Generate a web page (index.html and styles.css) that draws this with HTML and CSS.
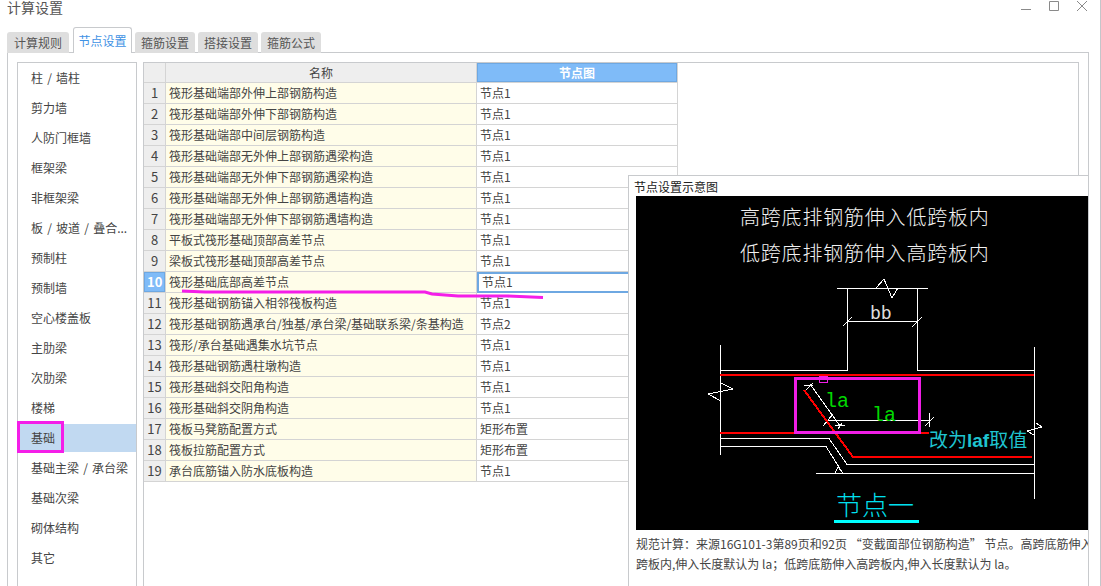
FILE: index.html
```html
<!doctype html>
<html lang="zh-CN">
  <head>
    <meta charset="UTF-8" />
    <meta name="viewport" content="width=device-width, initial-scale=1.0" />
    <title>计算设置</title>
    <link rel="stylesheet" href="styles.css">
  </head>

  <body>
    <div class="window">
      <div class="title-bar">
        <span class="title">计算设置</span>
        <div class="window-buttons">
          <svg width="12" height="12" viewBox="0 0 12 12"><path d="M1 9.5h10" /></svg>
          <svg width="12" height="12" viewBox="0 0 12 12"><path d="M1.5 1.5h9v9h-9z" /></svg>
          <svg width="12" height="12" viewBox="0 0 12 12"><path d="M1 1l10 10M11 1L1 11" /></svg>
        </div>
      </div>

      <div class="tabs">
        <div class="tab">计算规则</div>
        <div class="tab active">节点设置</div>
        <div class="tab">箍筋设置</div>
        <div class="tab">搭接设置</div>
        <div class="tab">箍筋公式</div>
      </div>

      <div class="panel">
        <ul class="side-list">
          <li>柱 / 墙柱</li>
          <li>剪力墙</li>
          <li>人防门框墙</li>
          <li>框架梁</li>
          <li>非框架梁</li>
          <li>板 / 坡道 / 叠合...</li>
          <li>预制柱</li>
          <li>预制墙</li>
          <li>空心楼盖板</li>
          <li>主肋梁</li>
          <li>次肋梁</li>
          <li>楼梯</li>
          <li class="selected">基础</li>
          <li>基础主梁 / 承台梁</li>
          <li>基础次梁</li>
          <li>砌体结构</li>
          <li>其它</li>
        </ul>

        <div class="grid-box">
          <table class="grid">
            <thead>
              <tr><th class="num"></th><th class="name">名称</th><th class="node">节点图</th></tr>
            </thead>
            <tbody>
              <tr><td class="num">1</td><td class="name">筏形基础端部外伸上部钢筋构造</td><td>节点1</td></tr>
              <tr><td class="num">2</td><td class="name">筏形基础端部外伸下部钢筋构造</td><td>节点1</td></tr>
              <tr><td class="num">3</td><td class="name">筏形基础端部中间层钢筋构造</td><td>节点1</td></tr>
              <tr><td class="num">4</td><td class="name">筏形基础端部无外伸上部钢筋遇梁构造</td><td>节点1</td></tr>
              <tr><td class="num">5</td><td class="name">筏形基础端部无外伸下部钢筋遇梁构造</td><td>节点1</td></tr>
              <tr><td class="num">6</td><td class="name">筏形基础端部无外伸上部钢筋遇墙构造</td><td>节点1</td></tr>
              <tr><td class="num">7</td><td class="name">筏形基础端部无外伸下部钢筋遇墙构造</td><td>节点1</td></tr>
              <tr><td class="num">8</td><td class="name">平板式筏形基础顶部高差节点</td><td>节点1</td></tr>
              <tr><td class="num">9</td><td class="name">梁板式筏形基础顶部高差节点</td><td>节点1</td></tr>
              <tr class="current"><td class="num">10</td><td class="name">筏形基础底部高差节点</td><td class="editing">节点1</td></tr>
              <tr><td class="num">11</td><td class="name">筏形基础钢筋锚入相邻筏板构造</td><td>节点1</td></tr>
              <tr><td class="num">12</td><td class="name">筏形基础钢筋遇承台/独基/承台梁/基础联系梁/条基构造</td><td>节点2</td></tr>
              <tr><td class="num">13</td><td class="name">筏形/承台基础遇集水坑节点</td><td>节点1</td></tr>
              <tr><td class="num">14</td><td class="name">筏形基础钢筋遇柱墩构造</td><td>节点1</td></tr>
              <tr><td class="num">15</td><td class="name">筏形基础斜交阳角构造</td><td>节点1</td></tr>
              <tr><td class="num">16</td><td class="name">筏形基础斜交阴角构造</td><td>节点1</td></tr>
              <tr><td class="num">17</td><td class="name">筏板马凳筋配置方式</td><td>矩形布置</td></tr>
              <tr><td class="num">18</td><td class="name">筏板拉筋配置方式</td><td>矩形布置</td></tr>
              <tr><td class="num">19</td><td class="name">承台底筋锚入防水底板构造</td><td>节点1</td></tr>
            </tbody>
          </table>
        </div>

        <div class="preview">
          <div class="preview-title">节点设置示意图</div>
          <svg class="drawing" width="452" height="334" viewBox="636 196 452 334">
            <text class="cad-title" x="740" y="225">高跨底排钢筋伸入低跨板内</text>
            <text class="cad-title" x="740" y="261">低跨底排钢筋伸入高跨板内</text>

            <g class="white-lines">
              <path d="M837 288.5H928M876 288L884 279L892 298L898 288" />
              <path d="M847.5 288V370.5H720.5M720.5 345V455M917.5 288V370.5H1034.5M1034.5 347V499" />
              <path d="M847 321.5H917M843 326L852 317M912 327L922 317" />
              <path d="M720 438.5H829L847 464.5H1034M720 446.5H826L843 473.5M816 473.5H1034M835 473L838 467L843 473" />
              <path d="M721 383L733 389L708 394L721 401M1036 423L1042 427L1027 431L1034 435" />
              <path d="M810 384L840 426M804 385H813M806 390L813 383M835 425H845M838 429L842 423" />
              <path d="M828 420.5H929M823 426L833 414M929.5 413V427M925 426L934 417" />
            </g>

            <g class="red-lines">
              <path d="M720 375H1034M720 433H929" />
              <path d="M804 390L853 457H1032" />
            </g>

            <text class="cad-small" x="870" y="319">bb</text>
            <text class="cad-green" x="825" y="407">la</text>
            <text class="cad-green" x="872" y="421">la</text>
            <text class="cad-note" x="929" y="447">改为<tspan class="cad-note-latin">laf</tspan>取值</text>
            <text class="cad-node" x="836" y="515">节点一</text>
            <rect class="cad-underline" x="834" y="520" width="85" height="3" />

            <rect class="mark" x="795.5" y="378.5" width="124" height="54" />
            <rect class="mark-thin" x="819.5" y="376.5" width="8" height="6" />
          </svg>
          <div class="preview-text">
            <div>规范计算：来源16G101-3第89页和92页 “变截面部位钢筋构造” 节点。高跨底筋伸入低</div>
            <div>跨板内,伸入长度默认为 la；低跨底筋伸入高跨板内,伸入长度默认为 la。</div>
          </div>
        </div>
      </div>
    </div>

    <!-- hand drawn marks on top of the window -->
    <svg class="marks" width="1101" height="586" viewBox="0 0 1101 586">
      <rect x="18.5" y="422.5" width="44" height="29" />
      <path d="M182 291L205 292H425L432 294L458 296H507L543 297.5" />
    </svg>
  </body>
</html>
```

FILE: styles.css
```css
/* General styles */
html,
body {
  margin: 0;
  padding: 0;
  height: 100%;
  overflow: hidden;
}

body {
  background: #ffffff;
  color: #444444;
  font-family: 'Noto Sans CJK SC', 'Liberation Sans', sans-serif;
  font-size: 12px;
}

.window {
  display: flex;
  flex-direction: column;
  height: 586px;
  box-sizing: border-box;
  padding-left: 7px;
  padding-right: 11px;
  border-right: 1px solid #c4c6ca;
}

.title-bar {
  display: flex;
  justify-content: space-between;
  height: 28px;
  flex-shrink: 0;
}

.title {
  font-size: 14px;
  line-height: 14px;
  color: #555555;
}

.window-buttons {
  display: flex;
  gap: 16px;
  margin-right: 1px;
}

.window-buttons svg {
  fill: none;
  stroke: #8a8a8a;
  stroke-width: 1;
}

/* Tabs */
.tabs {
  display: flex;
  align-items: flex-end;
  gap: 3px;
  height: 25px;
  flex-shrink: 0;
  margin-bottom: -1px;
  position: relative;
  z-index: 1;
}

.tab {
  width: 60px;
  height: 21px;
  line-height: 21px;
  text-align: center;
  background: #dedede;
  border-radius: 3px 3px 0 0;
  color: #555555;
}

.tab:first-child {
  width: 62px;
  margin-right: 1px;
}

.tab.active {
  width: 57px;
  height: 25px;
  line-height: 25px;
  background: #ffffff;
  border: 1px solid #c8cacd;
  border-bottom: none;
  color: #3f92e4;
}

/* Main panel */
.panel {
  display: flex;
  gap: 6px;
  flex: 1;
  min-height: 0;
  position: relative;
  overflow: hidden;
  box-sizing: border-box;
  border: 1px solid #c8cacd;
  border-bottom: none;
  padding: 9px 9px 0;
}

.side-list {
  width: 118px;
  flex-shrink: 0;
  margin: 0;
  padding: 0;
  list-style: none;
  border: 1px solid #c8cacd;
  border-bottom: none;
  word-spacing: 1.5px;
}

.side-list li {
  height: 30px;
  line-height: 30px;
  padding-left: 13px;
  white-space: nowrap;
}

.side-list li.selected {
  box-sizing: border-box;
  line-height: 28px;
  background: #c1d9f1;
  border-top: 1px solid #ffffff;
  border-bottom: 1px solid #ffffff;
}

/* Grid */
.grid-box {
  flex: 1;
  border: 1px solid #c8cacd;
  border-bottom: none;
}

.grid {
  width: 534px;
  table-layout: fixed;
  border-collapse: collapse;
}

.grid th,
.grid td {
  height: 20px;
  padding: 0 3px;
  box-sizing: content-box;
  border: 1px solid #d4d4d4;
  font-weight: normal;
  line-height: 20px;
  white-space: nowrap;
  overflow: hidden;
}

.grid th {
  background: #eeeeee;
  height: 19px;
  line-height: 19px;
  border-top: none;
}

.grid .num {
  width: 15px;
  background: #eeeeee;
  text-align: center;
  font-size: 13px;
  border-left: none;
}

.grid .name {
  width: 304px;
}

.grid td.name {
  background: #fffde9;
}

.grid th.node {
  background: #7fbbf8;
  box-shadow: inset 0 0 0 1px #6ea8e2;
  color: #ffffff;
  font-weight: bold;
}

.grid .current .num {
  background: #7fbbf8;
  box-shadow: inset 0 0 0 1px #6ea8e2;
  color: #ffffff;
  font-weight: bold;
}

.grid td.editing {
  padding-left: 5px;
  outline: 2px solid #6ea8e2;
  outline-offset: -2px;
}

/* Node preview */
.preview {
  position: absolute;
  left: 620px;
  top: 122px;
  width: 460px;
  height: 420px;
  box-sizing: border-box;
  background: #ffffff;
  border: 1px solid #c8cacd;
  border-right: none;
  overflow: hidden;
}

.preview-title {
  height: 20px;
  padding-left: 5px;
  line-height: 22px;
  color: #222222;
}

.drawing {
  display: block;
  margin-left: 7px;
  background: #000000;
}

.preview-text {
  margin: 4px 0 0 7px;
  line-height: 20px;
  white-space: nowrap;
  color: #444444;
}

.cad-title {
  fill: #f2f2f2;
  font-size: 20px;
  letter-spacing: 0.8px;
  font-weight: 300;
}

.white-lines path {
  fill: none;
  stroke: #ffffff;
  stroke-width: 1;
  shape-rendering: crispEdges;
}

.red-lines path {
  fill: none;
  stroke: #ff0000;
  stroke-width: 2;
  shape-rendering: crispEdges;
}

.cad-small {
  fill: #dddddd;
  font-family: 'DejaVu Sans Mono', monospace;
  font-size: 18px;
}

.cad-green {
  fill: #00d800;
  font-family: 'Liberation Mono', monospace;
  font-size: 20px;
}

.cad-note {
  fill: #1fc4d0;
  font-size: 19px;
}

.cad-note-latin {
  font-family: 'Liberation Sans', sans-serif;
  font-weight: bold;
}

.cad-node {
  fill: #00e0f0;
  font-size: 26px;
  font-weight: 300;
}

.cad-underline {
  fill: #00ffff;
}

.mark {
  fill: none;
  stroke: #f01ee6;
  stroke-width: 3;
}

.mark-thin {
  fill: none;
  stroke: #f01ee6;
  stroke-width: 1;
}

/* Hand drawn marks */
.marks {
  position: absolute;
  left: 0;
  top: 0;
  fill: none;
  stroke: #f41ee8;
  stroke-width: 3;
  pointer-events: none;
}
```
